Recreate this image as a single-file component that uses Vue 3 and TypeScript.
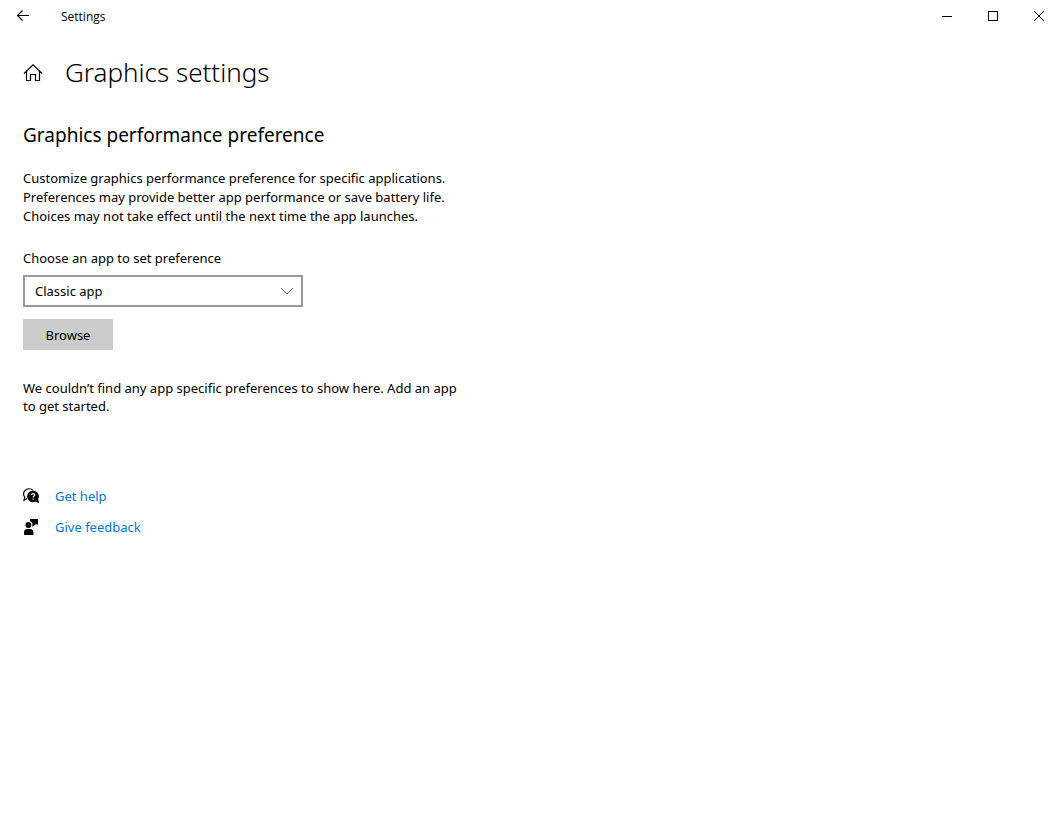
<script setup lang="ts">
import { ref } from 'vue'

const selectedApp = ref<string>('classic')

const appTypes: { value: string; label: string }[] = [
  { value: 'classic', label: 'Classic app' },
  { value: 'universal', label: 'Universal app' },
]
</script>

<template>
  <div class="window">
    <header class="titlebar">
      <button class="caption" type="button" aria-label="Back">
        <svg class="arrow" width="14" height="12" viewBox="0 0 14 12" aria-hidden="true">
          <path d="M13 5.5H1.5M6.5 .5L1.5 5.5L6.5 10.5" />
        </svg>
      </button>
      <span class="app-name">Settings</span>
      <div class="caption-group">
        <button class="caption" type="button" aria-label="Minimize">
          <svg class="crisp" width="10" height="10" viewBox="0 0 10 10" aria-hidden="true">
            <path d="M0 5.5H10" />
          </svg>
        </button>
        <button class="caption" type="button" aria-label="Maximize">
          <svg class="crisp" width="10" height="10" viewBox="0 0 10 10" aria-hidden="true">
            <path d="M.5 .5H9.5V9.5H.5Z" />
          </svg>
        </button>
        <button class="caption" type="button" aria-label="Close">
          <svg width="10" height="10" viewBox="0 0 10 10" aria-hidden="true">
            <path d="M0 0L10 10M10 0L0 10" />
          </svg>
        </button>
      </div>
    </header>

    <main class="content">
      <div class="heading">
        <button class="home" type="button" aria-label="Home">
          <svg width="20" height="20" viewBox="0 0 20 20" aria-hidden="true">
            <path d="M1 10.5L10 1.8L19 10.5M3.5 8.5V17.5H7.5V11.5H12.5V17.5H16.5V8.5" />
          </svg>
        </button>
        <h1>Graphics settings</h1>
      </div>

      <h2>Graphics performance preference</h2>
      <p class="intro">
        Customize graphics performance preference for specific applications.<br />
        Preferences may provide better app performance or save battery life.<br />
        Choices may not take effect until the next time the app launches.
      </p>

      <label for="app-type">Choose an app to set preference</label>
      <div class="select-box">
        <select id="app-type" v-model="selectedApp">
          <option v-for="app in appTypes" :key="app.value" :value="app.value">{{ app.label }}</option>
        </select>
        <svg class="chevron" width="14" height="8" viewBox="0 0 14 8" aria-hidden="true">
          <path d="M1 1L7 7L13 1" />
        </svg>
      </div>
      <button class="browse" type="button">Browse</button>

      <p class="empty">
        We couldn’t find any app specific preferences to show here. Add an app<br />
        to get started.
      </p>

      <nav class="links">
        <a href="#help">
          <svg width="16" height="16" viewBox="0 0 16 16" aria-hidden="true">
            <path class="line" d="M4 10.4L1 12.2L1.8 9.2C.3 7.2 .4 4.4 1.9 2.7C4 .2 7.8 .1 10 2.3" />
            <path class="fill" d="M10.2 2.8A5.6 5.6 0 0 1 15.2 11L16 15.4L12.6 13.5A5.7 5.7 0 1 1 10.2 2.8Z" />
            <path class="mark" d="M8.5 6.9C8.6 5.1 11.8 5.1 11.8 6.9C11.8 8.1 10.2 8.1 10.2 9.4M10.2 10.5V11.7" />
          </svg>
          <span>Get help</span>
        </a>
        <a href="#feedback">
          <svg width="16" height="16" viewBox="0 0 16 16" aria-hidden="true">
            <circle class="fill" cx="5.4" cy="6" r="3" />
            <path class="fill" d="M1 16V13.5Q1 10 4.5 10H7Q10.4 10 10.4 13.5V16ZM7 0H15V5.5H12.4L9.4 8V4.4Q8.6 2.8 7 2.2Z" />
          </svg>
          <span>Give feedback</span>
        </a>
      </nav>
    </main>
  </div>
</template>

<style>
body {
  margin: 0;
  background: #fff;
}
</style>

<style scoped>
.window {
  min-height: 100vh;
  background: #fff;
  color: #000;
  font: 13px/18px "Segoe UI", "Noto Sans", "Open Sans", sans-serif;
}

button,
select {
  margin: 0;
  padding: 0;
  border: 0;
  border-radius: 0;
  background: none;
  color: inherit;
  font: inherit;
}

svg {
  display: block;
  flex: none;
  fill: none;
  stroke: #000;
  stroke-width: 1;
}

.arrow,
.home svg,
.links .line {
  stroke-width: 1.2;
}

.crisp {
  shape-rendering: crispEdges;
}

.titlebar {
  display: flex;
  align-items: center;
  height: 32px;
}

.caption {
  display: grid;
  place-items: center;
  width: 46px;
  height: 32px;
}

.app-name {
  margin-left: 15px;
  padding-top: 2px;
  font-family: "Segoe UI", "Open Sans", sans-serif;
  font-size: 12px;
}

.caption-group {
  display: flex;
  margin-left: auto;
}

.caption-group .caption {
  padding-left: 2px;
}

.content {
  padding: 21px 23px;
}

.heading {
  display: flex;
  align-items: center;
  gap: 22px;
  height: 40px;
}

h1,
h2,
p {
  margin: 0;
}

h1 {
  padding-bottom: 2px;
  font-size: 26px;
  font-weight: 350;
  line-height: 38px;
}

h2 {
  margin-top: 29px;
  font-size: 19px;
  font-weight: 400;
  line-height: 26px;
}

.intro {
  margin-top: 21px;
  line-height: 19px;
}

label {
  display: block;
  margin-top: 23px;
}

.select-box {
  display: grid;
  align-items: center;
  width: 280px;
  max-width: 100%;
  margin-top: 8px;
}

.select-box > * {
  grid-area: 1 / 1;
}

select {
  appearance: none;
  width: 100%;
  height: 32px;
  padding: 0 32px 0 10px;
  border: 2px solid #999;
  background: #fff;
}

.chevron {
  justify-self: end;
  margin-right: 9px;
  stroke: #666;
  pointer-events: none;
}

.browse {
  display: block;
  min-width: 90px;
  height: 31px;
  margin-top: 12px;
  padding: 0 20px;
  background: #ccc;
}

.empty {
  margin-top: 29px;
}

.links {
  display: flex;
  flex-direction: column;
  align-items: flex-start;
  gap: 13px;
  margin-top: 72px;
}

.links a {
  display: flex;
  align-items: center;
  gap: 16px;
  color: #0078d7;
  text-decoration: none;
}

.links .fill {
  fill: #000;
  stroke: none;
}

.links .mark {
  stroke: #fff;
  stroke-width: 1.2;
}
</style>
